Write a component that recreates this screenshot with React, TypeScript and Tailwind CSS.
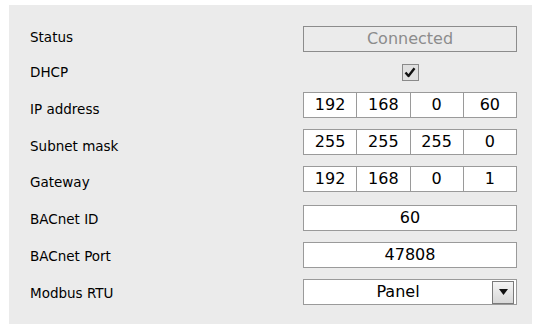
import React from "react"

const labelFont = { fontFamily: '"DejaVu Sans", Verdana, sans-serif' }

function Row({
  label,
  children,
  className = "",
  labelClass = "",
}: {
  label: string
  children: React.ReactNode
  className?: string
  labelClass?: string
}) {
  return (
    <div className={`flex h-[26px] items-center ${className}`}>
      <div className={`w-[294px] pl-[21px] text-[13.5px] leading-[18px] text-black ${labelClass}`} style={labelFont}>
        {label}
      </div>
      <div className="w-[214px]">{children}</div>
    </div>
  )
}

function Octets({ values }: { values: string[] }) {
  return (
    <div className="flex h-[26px] border border-[#9a9a9a] bg-white">
      {values.map((v, i) => (
        <div
          key={i}
          className={`flex flex-1 items-center justify-center text-[16px] text-black ${i > 0 ? "border-l border-[#9a9a9a]" : ""}`}
        >
          {v}
        </div>
      ))}
    </div>
  )
}

function Field({ value }: { value: string }) {
  return (
    <div className="flex h-[26px] items-center justify-center border border-[#9a9a9a] bg-white text-[16px] text-black">
      {value}
    </div>
  )
}

export default function App() {
  return (
    <div className="h-[331px] w-[536px] bg-white pl-[9px] pt-[5px]" style={{ fontFamily: '"DejaVu Sans", Verdana, sans-serif' }}>
      <div className="flex h-[319px] w-[523px] flex-col bg-[#ebebeb] pt-[21px]">
        <Row label="Status" labelClass="pb-[4px]">
          <div className="flex h-[26px] items-center justify-center border border-[#8c8c8c] text-[16px] text-[#8c8c8c]">
            Connected
          </div>
        </Row>
        <Row label="DHCP" className="mt-[11px] !h-[18px]">
          <div className="flex justify-center">
            <div className="flex h-[17px] w-[17px] items-center justify-center border border-[#8a8a8a] bg-[#e0e0e0]">
              <svg width="12" height="11" viewBox="0 0 12 11">
                <path d="M1.5 5.5 L4.5 9 L10.5 1.2" fill="none" stroke="#111" strokeWidth="2.4" strokeLinejoin="round" />
              </svg>
            </div>
          </div>
        </Row>
        <Row label="IP address" className="mt-[11px]" labelClass="pt-[8px]">
          <Octets values={["192", "168", "0", "60"]} />
        </Row>
        <Row label="Subnet mask" className="mt-[11px]" labelClass="pt-[8px]">
          <Octets values={["255", "255", "255", "0"]} />
        </Row>
        <Row label="Gateway" className="mt-[11px]" labelClass="pt-[6px]">
          <Octets values={["192", "168", "0", "1"]} />
        </Row>
        <Row label="BACnet ID" className="mt-[13px]" labelClass="pt-[2px]">
          <Field value="60" />
        </Row>
        <Row label="BACnet Port" className="mt-[11px]" labelClass="pt-[2px]">
          <Field value="47808" />
        </Row>
        <Row label="Modbus RTU" className="mt-[11px]" labelClass="pt-[2px]">
          <div className="flex h-[26px] items-center border border-[#9a9a9a] bg-white pr-[2px]">
            <div className="flex-1 text-center text-[16px] text-black">Panel</div>
            <div className="flex h-[23px] w-[22px] items-center justify-center border border-[#7a7a7a] bg-gradient-to-b from-[#f4f4f4] to-[#d8d8d8]">
              <svg width="9" height="6" viewBox="0 0 9 6">
                <path d="M0 0 H9 L4.5 6 Z" fill="#111" />
              </svg>
            </div>
          </div>
        </Row>
      </div>
    </div>
  )
}
